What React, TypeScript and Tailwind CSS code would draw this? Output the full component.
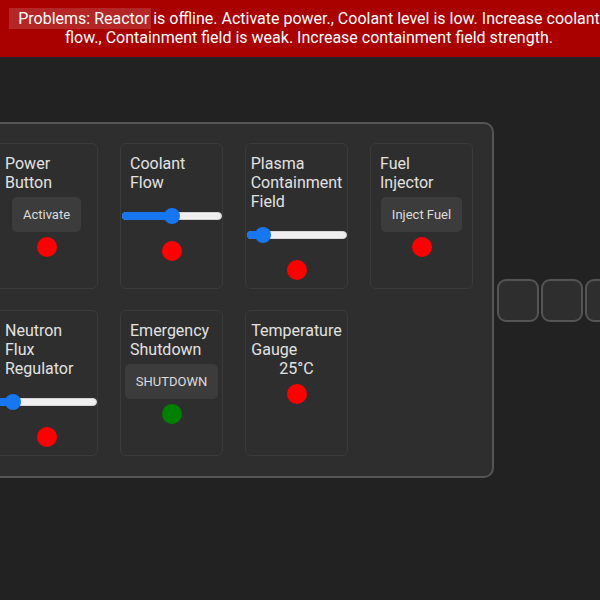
import React from 'react'

type Control =
  | { kind: 'button'; label: string }
  | { kind: 'slider'; value: number }
  | { kind: 'reading'; text: string }

type Part = { title: string; control: Control; ok: boolean }

const parts: Part[] = [
  { title: 'Power Button', control: { kind: 'button', label: 'Activate' }, ok: false },
  { title: 'Coolant Flow', control: { kind: 'slider', value: 0.5 }, ok: false },
  { title: 'Plasma Containment Field', control: { kind: 'slider', value: 0.1 }, ok: false },
  { title: 'Fuel Injector', control: { kind: 'button', label: 'Inject Fuel' }, ok: false },
  { title: 'Neutron Flux Regulator', control: { kind: 'slider', value: 0.1 }, ok: false },
  { title: 'Emergency Shutdown', control: { kind: 'button', label: 'SHUTDOWN' }, ok: true },
  { title: 'Temperature Gauge', control: { kind: 'reading', text: '25°C' }, ok: false },
]

function Slider({ value }: { value: number }) {
  // thumb travels inside the track, like the native range input
  const center = 8 + 84 * value
  return (
    <div className="relative mt-4 h-4 w-[100px] shrink-0">
      <div className="absolute inset-x-0 top-[4px] h-[8px] rounded-full border border-[#d6d6d6] bg-[#efefef]" />
      <div
        className="absolute left-0 top-[4px] h-[8px] rounded-full bg-[#1677f0]"
        style={{ width: center }}
      />
      <div
        className="absolute top-0 h-4 w-4 rounded-full bg-[#1677f0]"
        style={{ left: center - 8 }}
      />
    </div>
  )
}

function Card({ part }: { part: Part }) {
  const c = part.control
  const dot = part.ok ? 'bg-[#008000]' : 'bg-[#ff0000]'
  return (
    <div className="flex h-[146px] flex-col items-center rounded-[6px] border border-[#3b3b3b] bg-[#2e2e2e] px-[9px] pt-[10px]">
      <div className="text-[16px] leading-[19px] text-[#e2e2e2]">{part.title}</div>
      {c.kind === 'button' && (
        <>
          <button className="mt-[5px] h-[35px] shrink-0 whitespace-nowrap rounded-[5px] bg-[#3c3c3c] px-[11px] text-[13px] text-[#dcdcdc]">
            {c.label}
          </button>
          <div className={`mt-[5px] h-5 w-5 shrink-0 rounded-full ${dot}`} />
        </>
      )}
      {c.kind === 'slider' && (
        <>
          <Slider value={c.value} />
          <div className={`mt-[17px] h-5 w-5 shrink-0 rounded-full ${dot}`} />
        </>
      )}
      {c.kind === 'reading' && (
        <>
          <div className="text-center text-[16px] leading-[19px] text-[#e2e2e2]">{c.text}</div>
          <div className={`mt-[6px] h-5 w-5 shrink-0 rounded-full ${dot}`} />
        </>
      )}
    </div>
  )
}

export default function App() {
  return (
    <div className="h-[600px] w-[600px] overflow-hidden bg-[#222222] font-['Roboto',sans-serif]">
      {/* Problems banner */}
      <div className="h-[57px] bg-[#a90000] pl-[18px] pt-[9px] text-center text-[16px] leading-[19px] text-white">
        <span className="-ml-[9px] -mr-[2px] bg-white/15 py-[1px] pl-[9px] pr-[2px]">Problems: Reactor</span>{' '}
        is offline. Activate power., Coolant level is low. Increase coolant flow., Containment field is
        weak. Increase containment field strength.
      </div>

      {/* Reactor panel + connectors */}
      <div className="ml-[-25px] mt-[65px] flex items-center gap-[3px]">
        <div className="shrink-0 rounded-[10px] border-2 border-[#555555] bg-[#2e2e2e] pb-[20px] pl-[18px] pr-[19px] pt-[19px]">
          <div className="grid grid-cols-[repeat(4,103px)] gap-x-[22px] gap-y-[21px]">
            {parts.map((p) => (
              <Card key={p.title} part={p} />
            ))}
          </div>
        </div>
        <div className="flex shrink-0 gap-[2px]">
          {[0, 1, 2].map((i) => (
            <div
              key={i}
              className="h-[43px] w-[42px] rounded-[9px] border-2 border-[#555555] bg-[#2e2e2e]"
            />
          ))}
        </div>
      </div>
    </div>
  )
}
